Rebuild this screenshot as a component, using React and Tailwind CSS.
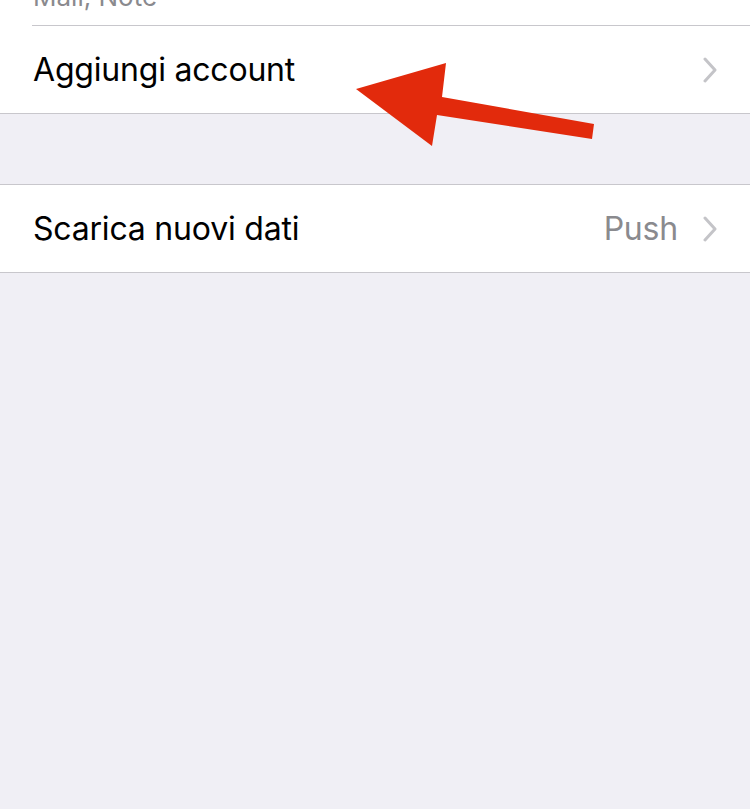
const font = { fontFamily: 'Inter, "Liberation Sans", sans-serif' };

function Chevron() {
  return (
    <svg width="16" height="26" viewBox="0 0 16 26" className="shrink-0">
      <path d="M3 2 L13 13 L3 24" fill="none" stroke="#c4c4c8" strokeWidth="3" strokeLinecap="round" strokeLinejoin="round" />
    </svg>
  );
}

function Row({ label, value }) {
  return (
    <div className="flex items-center h-[87px] pl-[33px] pr-[32px] bg-white">
      <span className="flex-1 text-[32px] text-black tracking-[-0.2px]">{label}</span>
      {value && <span className="text-[32px] text-[#8a8a8e] mr-[24px] tracking-[-0.2px]">{value}</span>}
      <Chevron />
    </div>
  );
}

export default function App() {
  return (
    <div className="relative w-[750px] h-[809px] bg-[#f0eff5] overflow-hidden" style={font}>
      {/* first group, scrolled up under the nav bar */}
      <div className="bg-white border-b border-[#c8c7cc]">
        <div className="h-[25px] overflow-hidden pl-[33px]">
          <div className="text-[26px] leading-[26px] text-[#8a8a8e] -mt-[16px]">Mail, Note</div>
        </div>
        <div className="ml-[32px] border-b border-[#c8c7cc]" />
        <Row label="Aggiungi account" />
      </div>

      <div className="h-[70px]" />

      <div className="bg-white border-y border-[#c8c7cc]">
        <Row label="Scarica nuovi dati" value="Push" />
      </div>

      {/* annotation arrow */}
      <svg className="absolute left-0 top-0 pointer-events-none" width="750" height="809">
        <polygon
          points="356,89 446,63 442,97 594,124 592,139 437,115 432,146"
          fill="#e22a0c"
        />
      </svg>
    </div>
  );
}
